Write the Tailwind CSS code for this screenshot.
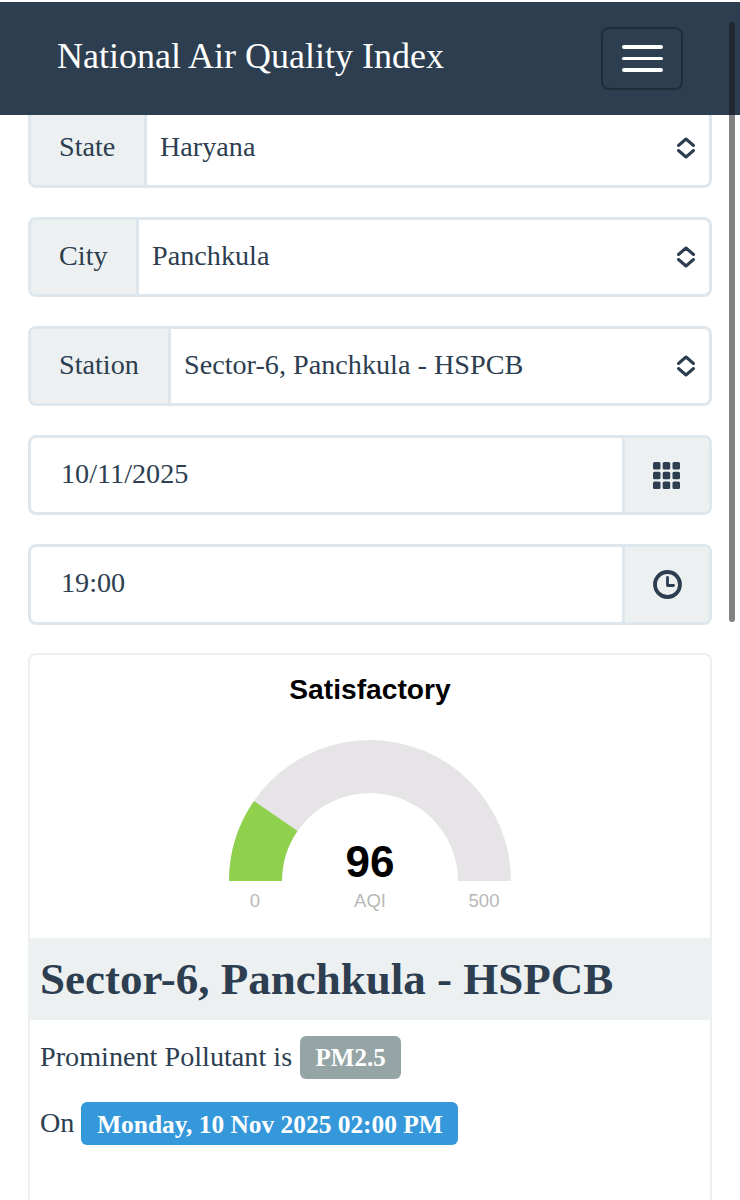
<!DOCTYPE html>
<html>
<head>
<meta charset="utf-8">
<script src="https://cdn.jsdelivr.net/npm/@tailwindcss/browser@4"></script>
</head>
<body class="bg-white overflow-hidden font-['Liberation_Serif',serif] text-[#2c3e50]">
<div class="relative w-[740px] h-[1200px] overflow-hidden pt-[2px]">
  <header class="relative z-10 h-[113px] bg-[#2c3e50] flex items-center justify-between pl-[57px] pr-[57px]">
    <span class="text-white text-[36px] leading-none mb-[6px]">National Air Quality Index</span>
    <button class="w-[82px] h-[63px] rounded-[8px] border-2 border-[#1f2d3b] flex flex-col items-center justify-center gap-[8px]">
      <span class="block w-[41px] h-[3.500px] rounded-full bg-white"></span>
      <span class="block w-[41px] h-[3.500px] rounded-full bg-white"></span>
      <span class="block w-[41px] h-[3.500px] rounded-full bg-white"></span>
    </button>
  </header>

  <main class="mt-[-7px] mx-[28px] flex flex-col gap-[29px]">
    <div class="flex h-[80px] rounded-[8px] border-[3px] border-[#dee6ee] text-[28.200px] overflow-hidden">
      <div class="w-[116px] bg-[#ecf0f1] border-r-[3px] border-[#dee6ee] flex items-center pl-[28px] pb-[2px]">State</div>
      <div class="flex-1 flex items-center justify-between pl-[13px] pr-[13px]">
        <span class="mb-[2px]">Haryana</span>
        <svg width="20" height="22" viewBox="0 0 20 22" fill="none" stroke="#2c3e50" stroke-width="3" stroke-linecap="round" stroke-linejoin="round"><path d="M2.5 8.5 10 2l7.500 6.500M2.500 13.500 10 20l7.500-6.500"/></svg>
      </div>
    </div>
    <div class="flex h-[80px] rounded-[8px] border-[3px] border-[#dee6ee] text-[28.200px] overflow-hidden">
      <div class="w-[108px] bg-[#ecf0f1] border-r-[3px] border-[#dee6ee] flex items-center pl-[28px] pb-[2px]">City</div>
      <div class="flex-1 flex items-center justify-between pl-[13px] pr-[13px]">
        <span class="mb-[2px]">Panchkula</span>
        <svg width="20" height="22" viewBox="0 0 20 22" fill="none" stroke="#2c3e50" stroke-width="3" stroke-linecap="round" stroke-linejoin="round"><path d="M2.5 8.5 10 2l7.500 6.500M2.500 13.500 10 20l7.500-6.500"/></svg>
      </div>
    </div>
    <div class="flex h-[80px] rounded-[8px] border-[3px] border-[#dee6ee] text-[28.200px] overflow-hidden">
      <div class="w-[140px] bg-[#ecf0f1] border-r-[3px] border-[#dee6ee] flex items-center pl-[28px] pb-[2px]">Station</div>
      <div class="flex-1 flex items-center justify-between pl-[13px] pr-[13px]">
        <span class="mb-[2px]">Sector-6, Panchkula - HSPCB</span>
        <svg width="20" height="22" viewBox="0 0 20 22" fill="none" stroke="#2c3e50" stroke-width="3" stroke-linecap="round" stroke-linejoin="round"><path d="M2.5 8.5 10 2l7.500 6.500M2.500 13.500 10 20l7.500-6.500"/></svg>
      </div>
    </div>
    <div class="flex h-[80px] rounded-[8px] border-[3px] border-[#dee6ee] text-[28.200px] overflow-hidden">
      <div class="flex-1 flex items-center pl-[30px] pb-[2px]">10/11/2025</div>
      <div class="w-[87px] bg-[#ecf0f1] border-l-[3px] border-[#dee6ee] flex items-center justify-center pr-[2px]">
        <svg width="27" height="27" viewBox="0 0 27 27" fill="#2c3e50">
          <rect x="0" y="0" width="7.500" height="7.500" rx="1.500"/><rect x="9.700" y="0" width="7.500" height="7.500" rx="1.500"/><rect x="19.500" y="0" width="7.500" height="7.500" rx="1.500"/>
          <rect x="0" y="9.700" width="7.500" height="7.500" rx="1.500"/><rect x="9.700" y="9.700" width="7.500" height="7.500" rx="1.500"/><rect x="19.500" y="9.700" width="7.500" height="7.500" rx="1.500"/>
          <rect x="0" y="19.500" width="7.500" height="7.500" rx="1.500"/><rect x="9.700" y="19.500" width="7.500" height="7.500" rx="1.500"/><rect x="19.500" y="19.500" width="7.500" height="7.500" rx="1.500"/>
        </svg>
      </div>
    </div>
    <div class="flex h-[81px] rounded-[8px] border-[3px] border-[#dee6ee] text-[28.200px] overflow-hidden">
      <div class="flex-1 flex items-center pl-[30px] pb-[2px]">19:00</div>
      <div class="w-[87px] bg-[#ecf0f1] border-l-[3px] border-[#dee6ee] flex items-center justify-center">
        <svg width="29" height="29" viewBox="0 0 29 29" fill="none" stroke="#2c3e50"><circle cx="14.500" cy="14.500" r="12.500" stroke-width="3.800"/><path d="M14.500 7.500v8h6" stroke-width="2.800" stroke-linecap="round" stroke-linejoin="round"/></svg>
      </div>
    </div>

    <section class="h-[700px] mt-[-1px] rounded-[8px] border-2 border-[#ecf0f1] flex flex-col">
      <svg width="680" height="282" viewBox="0 0 680 282" class="block shrink-0">
        <text x="340" y="44" text-anchor="middle" font-family="Liberation Sans" font-weight="700" font-size="28.200" fill="#000">Satisfactory</text>
        <path d="M199 226 A141 141 0 0 1 481 226 H428 A88 88 0 0 0 252 226 Z" fill="#e6e4e6"/>
        <path d="M199 226 A141 141 0 0 1 224 146 L267.500 176 A88 88 0 0 0 252 226 Z" fill="#8fd04c"/>
        <text x="340" y="222" text-anchor="middle" font-family="Liberation Sans" font-weight="700" font-size="44" fill="#000">96</text>
        <text x="225" y="252" text-anchor="middle" font-family="Liberation Sans" font-size="18.500" fill="#b8b8b8">0</text>
        <text x="340" y="252" text-anchor="middle" font-family="Liberation Sans" font-size="18.500" fill="#b8b8b8">AQI</text>
        <text x="454" y="252" text-anchor="middle" font-family="Liberation Sans" font-size="18.500" fill="#b8b8b8">500</text>
      </svg>
      <div class="h-[82px] mt-[1px] bg-[#ecf0f1] flex items-center pl-[10px] text-[45px] font-bold leading-none">Sector-6, Panchkula - HSPCB</div>
      <div class="pl-[10px] pt-[16px] text-[28.200px] leading-[34px] flex flex-col gap-[23px]">
        <div class="flex items-center gap-[8px]">
          <span class="mb-[2px]">Prominent Pollutant is</span>
          <span class="h-[43px] w-[101px] rounded-[6px] bg-[#95a5a6] text-white font-bold text-[25px] flex items-center justify-center">PM2.5</span>
        </div>
        <div class="flex items-center gap-[7px]">
          <span class="mb-[2px]">On</span>
          <span class="h-[43px] w-[377px] rounded-[6px] bg-[#3498db] text-white font-bold text-[25.400px] flex items-center justify-center whitespace-nowrap">Monday, 10 Nov 2025 02:00 PM</span>
        </div>
      </div>
    </section>
  </main>

  <div class="absolute z-20 left-[729px] top-[22px] w-[6px] h-[600px] rounded-full bg-[#1a1a1a]/55"></div>
</div>
</body>
</html>
